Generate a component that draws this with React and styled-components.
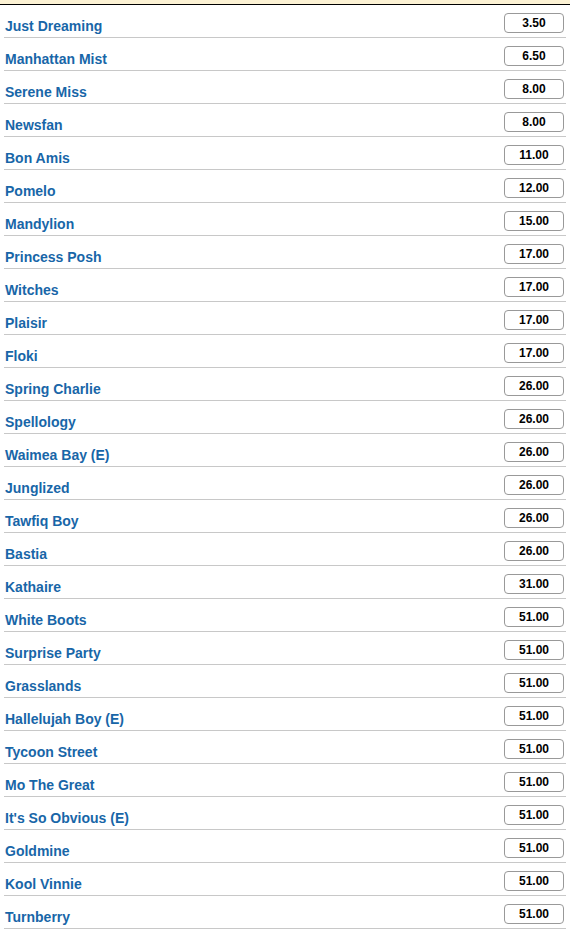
import React from "react";
import styled, { createGlobalStyle } from "styled-components";

const Global = createGlobalStyle`
  html, body { margin: 0; padding: 0; background: #fff; }
  body { font-family: "Liberation Sans", Arial, sans-serif; }
`;

const Page = styled.div`
  width: 570px;
  background: #fff;
`;

const TopBand = styled.div`
  height: 4px;
  background: #fcf2d4;
  border-bottom: 1px solid #000;
`;

const List = styled.ul`
  list-style: none;
  margin: 0;
  padding: 0 4px;
`;

const Row = styled.li`
  display: flex;
  justify-content: space-between;
  align-items: flex-start;
  height: 32px;
  border-bottom: 1px solid #c8c8c8;
  padding: 0 2px 0 1px;
`;

const Name = styled.a`
  padding-top: 13px;
  font-size: 14px;
  line-height: 16px;
  font-weight: bold;
  color: #1866a8;
  text-decoration: none;
`;

const Price = styled.span`
  margin-top: 8px;
  box-sizing: border-box;
  width: 60px;
  height: 20px;
  border: 1px solid #999;
  border-radius: 4px;
  background: #fff;
  font-size: 12px;
  line-height: 18px;
  font-weight: bold;
  color: #000;
  text-align: center;
`;

const runners = [
  ["Just Dreaming", "3.50"],
  ["Manhattan Mist", "6.50"],
  ["Serene Miss", "8.00"],
  ["Newsfan", "8.00"],
  ["Bon Amis", "11.00"],
  ["Pomelo", "12.00"],
  ["Mandylion", "15.00"],
  ["Princess Posh", "17.00"],
  ["Witches", "17.00"],
  ["Plaisir", "17.00"],
  ["Floki", "17.00"],
  ["Spring Charlie", "26.00"],
  ["Spellology", "26.00"],
  ["Waimea Bay (E)", "26.00"],
  ["Junglized", "26.00"],
  ["Tawfiq Boy", "26.00"],
  ["Bastia", "26.00"],
  ["Kathaire", "31.00"],
  ["White Boots", "51.00"],
  ["Surprise Party", "51.00"],
  ["Grasslands", "51.00"],
  ["Hallelujah Boy (E)", "51.00"],
  ["Tycoon Street", "51.00"],
  ["Mo The Great", "51.00"],
  ["It's So Obvious (E)", "51.00"],
  ["Goldmine", "51.00"],
  ["Kool Vinnie", "51.00"],
  ["Turnberry", "51.00"],
];

export default function App() {
  return (
    <Page>
      <Global />
      <TopBand />
      <List>
        {runners.map(([name, odds]) => (
          <Row key={name}>
            <Name>{name}</Name>
            <Price>{odds}</Price>
          </Row>
        ))}
      </List>
    </Page>
  );
}
